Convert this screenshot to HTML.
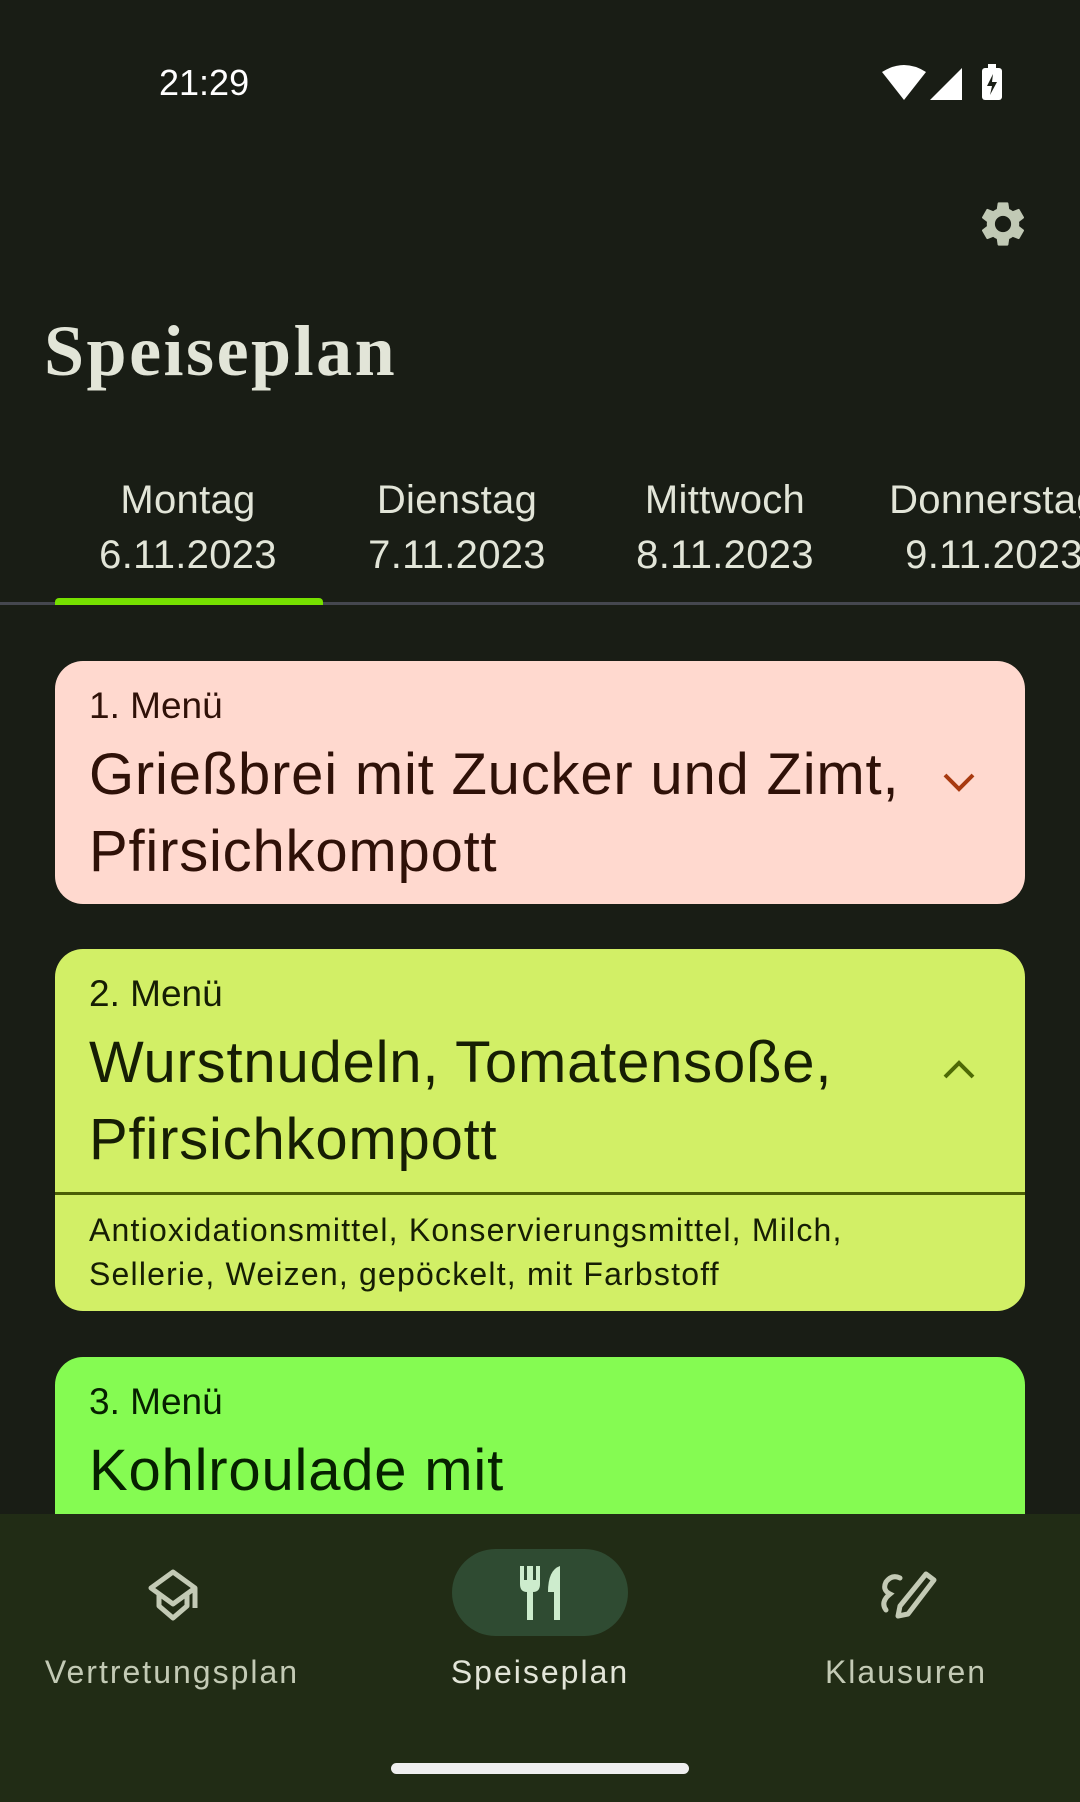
<!DOCTYPE html>
<html><head><meta charset="utf-8"><style>
*{margin:0;padding:0;box-sizing:border-box}
body{width:1080px;height:1802px;background:#191d15;font-family:"Liberation Sans",sans-serif;position:relative;overflow:hidden;color:#e2e5d8}
.abs{position:absolute}
.tab{position:absolute;top:473px;width:268px;text-align:center;font-size:40px;line-height:55px;color:#e2e5d8;letter-spacing:0.3px}
.card{position:absolute;left:55px;width:970px;border-radius:28px;overflow:hidden}
.lbl{position:absolute;left:34px;font-size:37px;letter-spacing:0px}
.main{position:absolute;left:34px;font-size:58px;line-height:77px;letter-spacing:0.8px}
.nl{position:absolute;top:1654px;font-size:32px;letter-spacing:2px;color:#c3cab5;text-align:center;width:340px}
</style></head><body>
<div class="abs" style="left:159px;top:62px;font-size:36px;color:#fff">21:29</div>
<svg class="abs" style="left:880px;top:62px" width="140" height="42" viewBox="0 0 140 42">
<path d="M2 10 Q24 -4 46 10 L24 38 Z" fill="#fff"/>
<path d="M82 6 L82 38 L50 38 Z" fill="#fff"/>
<rect x="102" y="6" width="20" height="32" rx="3" fill="#fff"/><rect x="108" y="2" width="8" height="5" fill="#fff"/>
<path d="M113 12 L107 24 L112 24 L110 33 L117 20 L112 20 Z" fill="#191d15"/>
</svg>
<svg class="abs" style="left:976px;top:197px" width="54" height="54" viewBox="0 0 24 24"><path fill="#c1c9b5" d="M19.14 12.94c.04-.3.06-.61.06-.94 0-.32-.02-.64-.07-.94l2.03-1.58a.49.49 0 0 0 .12-.61l-1.920-3.32a.49.49 0 0 0-.59-.22l-2.39.96c-.5-.38-1.03-.7-1.62-.94l-.36-2.54a.48.48 0 0 0-.48-.41h-3.84a.48.48 0 0 0-.47.41l-.36 2.54c-.59.24-1.130.57-1.62.94l-2.39-.96a.48.48 0 0 0-.59.22L2.74 8.87a.47.47 0 0 0 .12.61l2.03 1.580c-.05.3-.09.63-.09.94s.02.64.07.94l-2.03 1.58a.49.49 0 0 0-.12.61l1.92 3.32c.12.22.37.29.59.22l2.39-.96c.5.38 1.03.7 1.62.94l.36 2.54c.05.24.24.41.48.41h3.84c.24 0 .44-.17.47-.41l.36-2.54c.59-.24 1.13-.56 1.62-.94l2.39.96c.22.08.47 0 .59-.22l1.92-3.32c.12-.22.07-.47-.12-.61l-2.010-1.58zM12 15.6A3.6 3.6 0 1 1 12 8.4a3.6 3.6 0 0 1 0 7.2z"/></svg>
<div class="abs" style="left:44px;top:310px;font-family:'Liberation Serif',serif;font-weight:bold;font-size:72px;color:#e2e5d8;letter-spacing:2.5px">Speiseplan</div>
<div class="tab" style="left:54px">Montag<br>6.11.2023</div>
<div class="tab" style="left:323px">Dienstag<br>7.11.2023</div>
<div class="tab" style="left:591px">Mittwoch<br>8.11.2023</div>
<div class="tab" style="left:860px">Donnerstag<br>9.11.2023</div>
<div class="abs" style="left:0;top:602px;width:1080px;height:3px;background:#45474f"></div>
<div class="abs" style="left:55px;top:598px;width:268px;height:7px;background:#76e000;border-radius:4px 4px 0 0"></div>

<div class="card" style="top:661px;height:243px;background:#ffd9cf;color:#2f1108">
<div class="lbl" style="top:24px">1. Menü</div>
<div class="main" style="top:75px">Grießbrei mit Zucker und Zimt,<br>Pfirsichkompott</div>
<svg class="abs" style="left:885px;top:108px" width="38" height="26" viewBox="0 0 38 26"><path d="M5 6 L19 20 L33 6" stroke="#a83a10" stroke-width="4" fill="none"/></svg>
</div>

<div class="card" style="top:949px;height:362px;background:#d2ef66;color:#161e04">
<div class="lbl" style="top:24px">2. Menü</div>
<div class="main" style="top:75px">Wurstnudeln, Tomatensoße,<br>Pfirsichkompott</div>
<svg class="abs" style="left:885px;top:108px" width="38" height="26" viewBox="0 0 38 26"><path d="M5 20 L19 6 L33 20" stroke="#4e6a05" stroke-width="4" fill="none"/></svg>
<div class="abs" style="left:0;top:243px;width:970px;height:3px;background:#4b5e06"></div>
<div class="abs" style="left:34px;top:259px;font-size:32px;line-height:44px;letter-spacing:1.2px">Antioxidationsmittel, Konservierungsmittel, Milch,<br>Sellerie, Weizen, gepöckelt, mit Farbstoff</div>
</div>

<div class="card" style="top:1357px;height:300px;background:#85fb52;color:#062000">
<div class="lbl" style="top:24px">3. Menü</div>
<div class="main" style="top:75px">Kohlroulade mit</div>
</div>

<div class="abs" style="left:0;top:1514px;width:1080px;height:288px;background:#212c15"></div>
<div class="abs" style="left:452px;top:1549px;width:176px;height:87px;border-radius:44px;background:#2f4b32"></div>
<svg class="abs" style="left:142px;top:1568px" width="62" height="54" viewBox="0 0 62 54"><path d="M31 4 L53 20 L31 36 L9 20 Z M17 26 L17 38 L31 50 L45 38 L45 26 M53 20 L53 40" stroke="#c3cab5" stroke-width="5" fill="none" stroke-linejoin="round"/></svg>
<svg class="abs" style="left:514px;top:1562px" width="52" height="60" viewBox="0 0 52 60"><path d="M6 4 V22 Q6 30 13 30 V58 H19 V30 Q26 30 26 22 V4 H22 V18 H19 V4 H13 V18 H10 V4 Z" fill="#cdeccd"/><path d="M46 4 Q34 8 34 30 H40 V58 H46 Z" fill="#cdeccd"/></svg>
<svg class="abs" style="left:874px;top:1570px" width="64" height="50" viewBox="0 0 64 50"><path d="M26 8 Q18 4 12 12 Q8 20 16 24 Q6 32 12 40" stroke="#c3cab5" stroke-width="5" fill="none" stroke-linecap="round"/><path d="M52 4 L60 10 L34 44 L24 46 L26 36 Z" stroke="#c3cab5" stroke-width="5" fill="none" stroke-linejoin="round"/></svg>
<div class="nl" style="left:2px">Vertretungsplan</div>
<div class="nl" style="left:370px;color:#e2e5d8">Speiseplan</div>
<div class="nl" style="left:736px">Klausuren</div>
<div class="abs" style="left:391px;top:1763px;width:298px;height:11px;border-radius:6px;background:#efefef"></div>
</body></html>
